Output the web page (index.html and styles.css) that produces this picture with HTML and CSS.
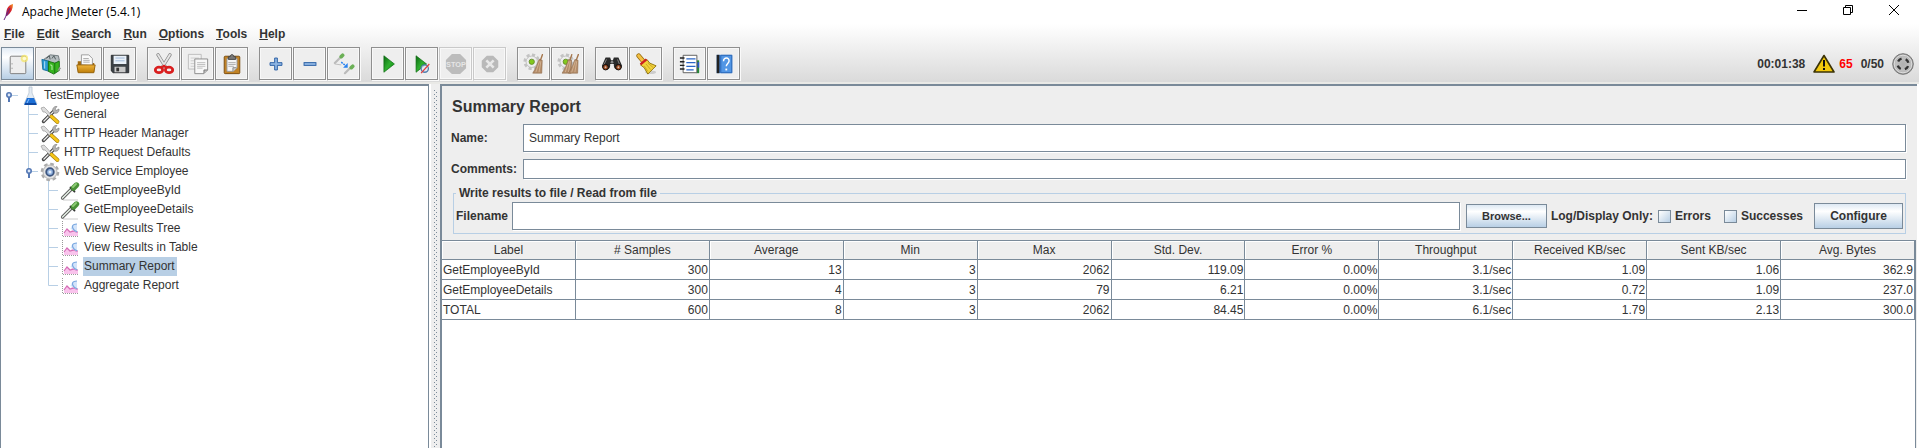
FILE: index.html
```html
<!DOCTYPE html>
<html lang="en">
<head>
<meta charset="utf-8">
<title>Apache JMeter (5.4.1)</title>
<link rel="stylesheet" href="styles.css">
</head>
<body>
<svg class="defs" aria-hidden="true">
  <defs>
    <linearGradient id="gGreen" x1="0" y1="0" x2="1" y2="1"><stop offset="0" stop-color="#0a6a10"/><stop offset=".5" stop-color="#2fae2f"/><stop offset="1" stop-color="#068a06"/></linearGradient>
    <linearGradient id="gFolder" x1="0" y1="0" x2="0" y2="1"><stop offset="0" stop-color="#f0b53c"/><stop offset="1" stop-color="#bd7d09"/></linearGradient>
    <linearGradient id="gFeather" x1="1" y1="0" x2="0" y2="1"><stop offset="0" stop-color="#f59a23"/><stop offset=".45" stop-color="#d8202a"/><stop offset="1" stop-color="#6b2480"/></linearGradient>
    <radialGradient id="gDisc"><stop offset="0" stop-color="#b0b0b0"/><stop offset=".7" stop-color="#c0c0c0"/><stop offset="1" stop-color="#999"/></radialGradient>
    <symbol id="wrench" viewBox="0 0 22 20">
      <path d="M4.500 16.500 15 6" stroke="#444" stroke-width="3.400" stroke-linecap="round"/>
      <path d="M4.500 16.500 15 6" stroke="#eee" stroke-width="1.300" stroke-dasharray="7 2"/>
      <path d="M14 6.500c-1-3 1-5.500 4-5l-2 2.500 1 1.500 3-1.500c.5 3-2 5-5 4z" fill="#b5b5b5" stroke="#777" stroke-width=".6"/>
      <path d="M2 3l3-1 3 3 5 6-1.500 1.500L6 7 4 7z" fill="#ddd" stroke="#999" stroke-width=".7"/>
      <path d="M12.500 11.500l6 5.500" stroke="#9b7710" stroke-width="3.800" stroke-linecap="round"/>
      <path d="M12.500 11.500l6 5.500" stroke="#f5c518" stroke-width="2.800" stroke-linecap="round"/>
    </symbol>
    <symbol id="dropper" viewBox="0 0 22 20">
      <path d="M4 19h15" stroke="#ccc"/>
      <path d="M3.500 17l9-9" stroke="#555" stroke-width="3.200" stroke-linecap="round"/>
      <path d="M3.500 17l8-8" stroke="#e4eee4" stroke-width="1.600" stroke-linecap="round"/>
      <path d="M11.500 6.500l4 4" stroke="#333" stroke-width="1.800" stroke-linecap="round"/>
      <path d="M14.500 7l3-3" stroke="#4a9138" stroke-width="5.400" stroke-linecap="round"/>
      <path d="M14 6l3-3" stroke="#8ccc74" stroke-width="2" stroke-linecap="round"/>
    </symbol>
    <symbol id="chart" viewBox="0 0 22 20">
      <path d="M3.500 2v15.500H19" fill="none" stroke="#999" stroke-dasharray="1 1"/>
      <path d="M5 17v-3l3-4 3 3 4-4 2 3 2 1v4z" fill="#f9c3ec"/>
      <path d="M5 14l3-4 3 3 4-1 2 1h2" fill="none" stroke="#d56cb5" stroke-width="1.200"/>
      <path d="M11 10c2 0 0-5 7-5v8c-3 0-4-3-7-3z" fill="#d3e4fa"/>
      <path d="M18 5c-6 0-5 4-3 6 1 1 2 1 3 2" fill="none" stroke="#7aa8e0" stroke-width="1.200"/>
    </symbol>
    <symbol id="toggle" viewBox="0 0 13 19">
      <path d="M7 9.500h6" stroke="#b8cfe5"/><path d="M4 11v5" stroke="#5478b5" stroke-width="2"/>
      <circle cx="4" cy="9" r="2.200" fill="#dde8f8" stroke="#5478b5" stroke-width="1.600"/>
    </symbol>
    <symbol id="branch" viewBox="0 0 13 19"><path d="M3.500 0v19M3.500 9.500H13" fill="none" stroke="#b8cfe5"/></symbol>
    <symbol id="branch-end" viewBox="0 0 13 19"><path d="M3.500 0v9.500H13" fill="none" stroke="#b8cfe5"/></symbol>
    <symbol id="gear" viewBox="0 0 22 22">
      <circle cx="10" cy="10" r="8" fill="none" stroke="#c3c3c3" stroke-width="3" stroke-dasharray="3.600 2.680"/>
      <circle cx="10" cy="10" r="6.500" fill="#eee" stroke="#bbb"/>
      <circle cx="10" cy="10" r="3" fill="#82c91e" stroke="#648b2b"/>
    </symbol>
    <symbol id="broom" viewBox="0 0 12 22">
      <path d="M11.500 0L9 7" stroke="#a5764c" stroke-width="1.500"/>
      <path d="M7.500 6l3.500 1-.5 14H.5C4 16 5.500 11 7.500 6z" fill="#b48c69" stroke="#8a6748" stroke-width=".6"/>
      <path d="M8 8L4 20M9.500 8L7.500 20" stroke="#dfc3a5" stroke-width=".7"/>
    </symbol>
  </defs>
</svg>

<header class="titlebar">
  <svg class="feather" viewBox="0 0 11 17"><path d="M10 0C6 1 4 4 3.500 7L2.500 12l1.500 0C8 9 10 5 10 0z" fill="url(#gFeather)"/><path d="M7 4L1 16" stroke="#6b2480" stroke-dasharray="8 1"/></svg>
  <h1 class="window-title">Apache JMeter (5.4.1)</h1>
  <div class="window-controls">
    <button aria-label="Minimize"><svg viewBox="0 0 12 12"><path d="M1 6.500h10" stroke="#000"/></svg></button>
    <button aria-label="Restore"><svg viewBox="0 0 12 12"><path d="M1.500 3.500h7v7h-7zM3.500 3V1.500h7v7H9" fill="none" stroke="#000"/></svg></button>
    <button aria-label="Close"><svg viewBox="0 0 12 12"><path d="M1 1l10 10M11 1L1 11" stroke="#000"/></svg></button>
  </div>
</header>

<div class="chrome">
  <nav class="menubar">
    <button><u>F</u>ile</button><button><u>E</u>dit</button><button><u>S</u>earch</button><button><u>R</u>un</button><button><u>O</u>ptions</button><button><u>T</u>ools</button><button><u>H</u>elp</button>
  </nav>
  <div class="toolbar">
    <div class="group">
      <button class="tool active" aria-label="New"><svg viewBox="0 0 24 24"><rect x="3.500" y="3.500" width="17" height="19" rx="1" fill="#eee" stroke="#777"/><path d="M5.500 11v1.500M5.500 16v1.500" stroke="#999"/><circle cx="19" cy="6" r="4" fill="#f4e465" opacity=".75"/><circle cx="19" cy="6" r="2" fill="#fffbd0"/></svg></button>
      <button class="tool" aria-label="Templates"><svg viewBox="0 0 24 24"><path d="M3 7l7-5 9 1 1 5-6 5z" fill="#b5bdc0" stroke="#6d777b"/><path d="M6 6l3-3 1 4M12 6l2-3 2 4" fill="none" stroke="#4c5658"/><path d="M1 7l8 2v11l-7-2z" fill="#2a9bd8" stroke="#176d9d"/><path d="M4 9v8" stroke="#bfe5fa"/><path d="M8 9l7 2 5-2v10l-6 4-6-3z" fill="#37b41f" stroke="#187012"/><path d="M15 11v11" stroke="#187012"/><path d="M10 13l2 .5v5" fill="none" stroke="#c8f5be"/><path d="M20 15l2 2-4 3z" fill="#999"/></svg></button>
      <button class="tool" aria-label="Open"><svg viewBox="0 0 24 24"><path d="M3 9h6l1 2h11v10H3z" fill="#a36b10"/><path d="M7 13V2h8l4 4v8z" fill="#fafafa" stroke="#999"/><path d="M9 6h6M9 8h7M9 10h7" stroke="#aaa"/><path d="M2 13h20l-1.500 8.500h-17z" fill="url(#gFolder)" stroke="#94600a"/></svg></button>
      <button class="tool" aria-label="Save"><svg viewBox="0 0 24 24"><path d="M2.500 2.500h19v19h-17l-2-2z" fill="#3c4146" stroke="#25282b"/><path d="M5 3h14v9H5z" fill="#e9f0f8"/><path d="M7 5.500h10M7 8.500h10" stroke="#9bb6d5"/><path d="M6 15h12v6H6z" fill="#c8c8c8"/><path d="M8 16h3v4H8z" fill="#333"/></svg></button>
    </div>
    <div class="group">
      <button class="tool" aria-label="Cut"><svg viewBox="0 0 24 24"><path d="M5.500 2l8 13M18.500 2l-8 13" stroke="#888" stroke-width="3.600" stroke-linecap="round"/><path d="M5.500 2l8 13M18.500 2l-8 13" stroke="#e6e6e6" stroke-width="2" stroke-linecap="round"/><ellipse cx="6.500" cy="18.500" rx="4" ry="3" fill="none" stroke="#d91e1e" stroke-width="3"/><ellipse cx="17.500" cy="18.500" rx="4" ry="3" fill="none" stroke="#d91e1e" stroke-width="3"/><path d="M9 16l3-2 3 2" fill="none" stroke="#d91e1e" stroke-width="2.400"/></svg></button>
      <button class="tool" aria-label="Copy"><svg viewBox="0 0 24 24"><path d="M1.500 1.500h14v16h-14z" fill="#f1f1f1" stroke="#bbb"/><path d="M4 5.500h9M4 8.500h4M4 11.500h4M4 14.500h4" stroke="#ccc"/><path d="M8.500 6.500h14v12l-4 4h-10z" fill="#f8f8f8" stroke="#888"/><path d="M18.500 22v-3.500h4" fill="#bbb" stroke="#777"/><path d="M11 10.500h9M11 12.500h9M11 14.500h9M11 16.500h6" stroke="#bbb"/></svg></button>
      <button class="tool" aria-label="Paste"><svg viewBox="0 0 24 24"><rect x="3.500" y="3.500" width="17" height="19" rx="1" fill="#c28325" stroke="#76480b"/><path d="M6.500 6h11v10l-4 4h-7z" fill="#f5f5f5" stroke="#999"/><path d="M8 4h2c0-3 4-3 4 0h2v3H8z" fill="#777" stroke="#444"/><path d="M8 10.500h8M8 12.500h8M8 14.500h6" stroke="#aaa"/><path d="M13 20v-4h4" fill="#ccc" stroke="#888"/></svg></button>
    </div>
    <div class="group">
      <button class="tool" aria-label="Expand all"><svg viewBox="0 0 24 24"><path d="M10.500 5.500h3v5h5v3h-5v5h-3v-5h-5v-3h5z" fill="#8eb5e2" stroke="#275da3"/></svg></button>
      <button class="tool" aria-label="Collapse all"><svg viewBox="0 0 24 24"><rect x="5.500" y="10.500" width="13" height="3" fill="#8eb5e2" stroke="#275da3"/></svg></button>
      <button class="tool" aria-label="Toggle"><svg viewBox="0 0 24 24"><path d="M2 11l6-6M13 22l6-6" stroke="#bbb" stroke-width="2.400" stroke-linecap="round"/><path d="M9 4l1.500-1.500M20 16l1.500-1.500" stroke="#6bb056" stroke-width="4" stroke-linecap="round"/><path d="M2 12l7 1" stroke="#bbb"/><path d="M9 10l5 4" stroke="#2882f0" stroke-width="1.600" stroke-dasharray="2 1"/><path d="M16 11v5h-5z" fill="#2882f0"/></svg></button>
    </div>
    <div class="group">
      <button class="tool" aria-label="Start"><svg viewBox="0 0 24 24"><path d="M7.500 3l11.500 9L7.500 21z" fill="url(#gGreen)" stroke="#07640b" stroke-width=".7"/></svg></button>
      <button class="tool" aria-label="Start no pauses"><svg viewBox="0 0 24 24"><path d="M5.500 3l11.500 9-11.500 9z" fill="url(#gGreen)" stroke="#07640b" stroke-width=".7"/><circle cx="15" cy="17" r="4" fill="#dce8f5" fill-opacity=".8" stroke="#527fae" stroke-width="1.400"/><path d="M11 22l9-10" stroke="#e23b3b" stroke-width="1.300"/></svg></button>
      <button class="tool off" aria-label="Stop" disabled><svg viewBox="0 0 24 24"><path d="M7.500 1h9L23 7.500v9L16.500 23h-9L1 16.500v-9z" fill="#bcbcbc"/><text x="12" y="15" text-anchor="middle" class="stop-text">STOP</text></svg></button>
      <button class="tool off" aria-label="Shutdown" disabled><svg viewBox="0 0 24 24"><path d="M8.500 3h7L21 8.500v7L15.500 21h-7L3 15.500v-7z" fill="#b9b9b9"/><path d="M8 8l8 8M16 8l-8 8" stroke="#e8e8e8" stroke-width="2.800"/></svg></button>
    </div>
    <div class="group">
      <button class="tool" aria-label="Clear"><svg viewBox="0 0 24 24"><use href="#gear" x="0" y="0" width="21" height="21"/><use href="#broom" x="10" y="1" width="12" height="22"/></svg></button>
      <button class="tool" aria-label="Clear all"><svg viewBox="0 0 24 24"><use href="#gear" x="0" y="0" width="21" height="21"/><use href="#broom" x="5" y="1" width="12" height="22"/><use href="#broom" x="12" y="1" width="12" height="22"/></svg></button>
    </div>
    <div class="group">
      <button class="tool" aria-label="Search"><svg viewBox="0 0 24 24"><path d="M5 5h5l1 3h2l1-3h5l4 9c0 6-9 6-9 0v-2h-4v2c0 6-9 6-9 0z" fill="#292929"/><path d="M6 7l-3 6M18 7l2 5" stroke="#888"/><circle cx="5" cy="15.500" r="3" fill="#9a4a22" stroke="#080808"/><circle cx="19" cy="15.500" r="3" fill="#9a4a22" stroke="#080808"/><circle cx="5" cy="15.500" r="1" fill="#d6c0b0"/><circle cx="19" cy="15.500" r="1" fill="#d6c0b0"/><circle cx="12" cy="10" r="1.500" fill="#888"/></svg></button>
      <button class="tool" aria-label="Reset search"><svg viewBox="0 0 24 24"><ellipse cx="17" cy="21" rx="6" ry="2" fill="#ccc"/><path d="M4 3l5 6" stroke="#966b0c" stroke-width="5" stroke-linecap="round"/><path d="M4 3l5 6" stroke="#f3bf42" stroke-width="3.400" stroke-linecap="round"/><path d="M6 13l7-6 3 4 7 3-9 9-4-7z" fill="#f2d23c" stroke="#8d7109"/><path d="M10 14l4 6M12 12l5 6M14 11l6 5" stroke="#b99a1c" stroke-width=".8"/><path d="M6 12.500l6.500-5.500" stroke="#cf2020" stroke-width="2.600"/></svg></button>
    </div>
    <div class="group">
      <button class="tool" aria-label="Function helper"><svg viewBox="0 0 24 24"><path d="M19 8h3v14h-3z" fill="#248c38"/><path d="M20 10h2v6h-2z" fill="#2a55d0"/><path d="M4.500 2.500h15v19h-15z" fill="#fff" stroke="#555"/><path d="M8 6.500h10M8 10.500h10M8 14.500h10M8 18.500h8" stroke="#2b66c8" stroke-width="1.400"/><path d="M1 5.500h5M1 9.500h5M1 13.500h5M1 17.500h5" stroke="#222" stroke-width="1.500"/></svg></button>
      <button class="tool" aria-label="Help"><svg viewBox="0 0 24 24"><path d="M4 2h17v20H4z" fill="#4a8bdc"/><path d="M4 2h3v20H4z" fill="#222"/><path d="M8.500 2.500h12v19h-12z" fill="#5296e5" stroke="#2b67b5"/><path d="M11.500 9c0-5 6.500-4.500 6 0-.3 2.500-3 2.500-3 5.500" fill="none" stroke="#fff" stroke-width="1.600"/><path d="M13.500 17h2v2h-2z" fill="#fff"/></svg></button>
    </div>
    <div class="status">
      <span>00:01:38</span>
      <svg class="warn" viewBox="0 0 22 19"><path d="M11 1.500L21 18H1z" fill="#f2c80c" stroke="#3a3206" stroke-width="1.600" stroke-linejoin="round"/><path d="M11 6v6.500M11 14v2" stroke="#111" stroke-width="2"/></svg>
      <span class="errors-count">65</span>
      <span class="threads">0/50</span>
      <svg class="disc" viewBox="0 0 22 22"><circle cx="11" cy="11" r="10.300" fill="url(#gDisc)" stroke="#777"/><circle cx="11" cy="11" r="8.800" fill="none" stroke="#ddd"/><circle cx="11" cy="11" r="5.500" fill="none" stroke="#333" stroke-width="2.400" stroke-dasharray="4.300 4.340" stroke-dashoffset="-2.170"/></svg>
    </div>
  </div>
</div>

<main class="workspace">
  <nav class="tree" aria-label="Test plan">
    <ul>
      <li><div class="node"><svg class="guide"><use href="#toggle"/></svg><svg class="icon" viewBox="0 0 22 20"><path d="M10 1h3v6l5 11H5l5-11z" fill="#e3ebf3" stroke="#b7c4d0" stroke-width=".8"/><path d="M8 12h7l3 7H5z" fill="#1c6fd6"/><path d="M6 18h11" stroke="#0b3d91" stroke-width="1.500"/><path d="M10 13l-2 4" stroke="#8dc2ff"/></svg><span class="name">TestEmployee</span></div>
        <ul>
          <li><div class="node"><svg class="guide"><use href="#branch"/></svg><svg class="icon"><use href="#wrench"/></svg><span class="name">General</span></div></li>
          <li><div class="node"><svg class="guide"><use href="#branch"/></svg><svg class="icon"><use href="#wrench"/></svg><span class="name">HTTP Header Manager</span></div></li>
          <li><div class="node"><svg class="guide"><use href="#branch"/></svg><svg class="icon"><use href="#wrench"/></svg><span class="name">HTTP Request Defaults</span></div></li>
          <li><div class="node"><svg class="guide" viewBox="0 0 13 19"><path d="M3.500 0v7" stroke="#b8cfe5"/><use href="#toggle"/></svg><svg class="icon" viewBox="0 0 22 20"><circle cx="11" cy="10" r="8" fill="none" stroke="#aaa" stroke-width="2.600" stroke-dasharray="3.600 2.680"/><circle cx="11" cy="10" r="7" fill="#e2e2e2" stroke="#b5b5b5"/><circle cx="11" cy="10" r="3.800" fill="#8fb0dd" stroke="#3d557f" stroke-width="1.800"/><circle cx="11" cy="10" r="1.500" fill="#e3edfb"/></svg><span class="name">Web Service Employee</span></div>
            <ul>
              <li><div class="node"><svg class="guide"><use href="#branch"/></svg><svg class="icon"><use href="#dropper"/></svg><span class="name">GetEmployeeById</span></div></li>
              <li><div class="node"><svg class="guide"><use href="#branch"/></svg><svg class="icon"><use href="#dropper"/></svg><span class="name">GetEmployeeDetails</span></div></li>
              <li><div class="node"><svg class="guide"><use href="#branch"/></svg><svg class="icon"><use href="#chart"/></svg><span class="name">View Results Tree</span></div></li>
              <li><div class="node"><svg class="guide"><use href="#branch"/></svg><svg class="icon"><use href="#chart"/></svg><span class="name">View Results in Table</span></div></li>
              <li><div class="node"><svg class="guide"><use href="#branch"/></svg><svg class="icon"><use href="#chart"/></svg><span class="name selected">Summary Report</span></div></li>
              <li><div class="node"><svg class="guide"><use href="#branch-end"/></svg><svg class="icon"><use href="#chart"/></svg><span class="name">Aggregate Report</span></div></li>
            </ul>
          </li>
        </ul>
      </li>
    </ul>
  </nav>
  <div class="divider"></div>
  <section class="pane">
    <form class="form">
      <h2>Summary Report</h2>
      <div class="field"><label for="name">Name:</label><input id="name" class="tall" type="text" value="Summary Report"></div>
      <div class="field"><label for="comments">Comments:</label><input id="comments" class="short" type="text"></div>
      <fieldset>
        <legend>Write results to file / Read from file</legend>
        <div class="file-row">
          <label for="filename">Filename</label>
          <input id="filename" class="tall" type="text">
          <button type="button" class="push browse">Browse...</button>
          <span class="log-label">Log/Display Only:</span>
          <label class="check"><input type="checkbox">Errors</label>
          <label class="check"><input type="checkbox">Successes</label>
          <button type="button" class="push configure">Configure</button>
        </div>
      </fieldset>
    </form>
    <div class="results">
      <table>
        <thead><tr><th>Label</th><th># Samples</th><th>Average</th><th>Min</th><th>Max</th><th>Std. Dev.</th><th>Error %</th><th>Throughput</th><th>Received KB/sec</th><th>Sent KB/sec</th><th>Avg. Bytes</th></tr></thead>
        <tbody>
          <tr><td>GetEmployeeById</td><td>300</td><td>13</td><td>3</td><td>2062</td><td>119.09</td><td>0.00%</td><td>3.1/sec</td><td>1.09</td><td>1.06</td><td>362.9</td></tr>
          <tr><td>GetEmployeeDetails</td><td>300</td><td>4</td><td>3</td><td>79</td><td>6.21</td><td>0.00%</td><td>3.1/sec</td><td>0.72</td><td>1.09</td><td>237.0</td></tr>
          <tr><td>TOTAL</td><td>600</td><td>8</td><td>3</td><td>2062</td><td>84.45</td><td>0.00%</td><td>6.1/sec</td><td>1.79</td><td>2.13</td><td>300.0</td></tr>
        </tbody>
      </table>
    </div>
  </section>
</main>
</body>
</html>
```
FILE: styles.css
```css
* { box-sizing: border-box; }

body {
  margin: 0;
  min-height: 100vh;
  display: flex;
  flex-direction: column;
  background: #fff;
  color: #333;
  font: 12px/14px "Liberation Sans", Arial, sans-serif;
}

button, input { font: inherit; color: inherit; margin: 0; padding: 0; }
ul { list-style: none; margin: 0; padding: 0; }
svg { display: block; flex: none; fill: none; }
.defs { position: absolute; width: 0; height: 0; }

/* Title bar */
.titlebar {
  display: flex;
  align-items: center;
  height: 24px;
  padding: 0 19px 0 3px;
}
.feather { width: 11px; height: 17px; margin-right: 8px; }
.window-title {
  flex: 1;
  margin: 0;
  color: #000;
  font: 12px/16px "Open Sans", "Noto Sans", sans-serif;
}
.window-controls { display: flex; gap: 34px; padding-bottom: 4px; }
.window-controls button { border: 0; background: none; }
.window-controls svg { width: 12px; height: 12px; }

/* Menu and toolbar */
.chrome {
  background: linear-gradient(#fff, #dadada);
  border-bottom: 2px solid #e9e9e6;
}
.menubar { display: flex; gap: 12px; padding: 3px 4px; font-weight: bold; }
.menubar button { border: 0; background: none; }
.toolbar { display: flex; gap: 11px; padding: 3px 5px 2px 1px; }
.group { display: flex; gap: 1px; }
.tool {
  display: flex;
  align-items: center;
  justify-content: center;
  width: 33px;
  height: 33px;
  border: 1px solid #8f8f8f;
  background: #eee;
  box-shadow: inset 0 0 0 1px #f8f8f8, 1px 1px 0 #fafafa;
}
.tool svg { width: 22px; height: 22px; }
.tool.active {
  border-color: #7a8a99;
  background: linear-gradient(#e3ecf5, #fff 30%, #b8cfe5);
  box-shadow: 1px 1px 0 #fafafa;
}
.tool.off { border-color: #c9c9c9; }
.stop-text { font: bold 8px "Liberation Sans", sans-serif; fill: #e6e6e6; }
.status {
  display: flex;
  align-items: center;
  margin-left: auto;
  font-weight: bold;
}
.warn { width: 22px; height: 19px; margin: 0 4px 0 8px; }
.errors-count { color: #f00; }
.threads { margin: 0 8px; }
.disc { width: 22px; height: 22px; }

/* Workspace */
.workspace { flex: 1; display: flex; padding-right: 2px; }
.tree {
  width: 429px;
  border: solid #7a8a99;
  border-width: 2px 1px 0 1px;
}
.tree ul ul { padding-left: 20px; }
.tree > ul { padding-left: 4px; }
.node { display: flex; align-items: center; height: 19px; }
.guide { width: 13px; height: 19px; }
.icon { width: 22px; height: 20px; margin: 0 2px 0 1px; }
.name { padding: 2px 2px 3px 1px; }
.name.selected { background: #b8cfe5; }

/* Splitter with its staggered grip dots */
.divider {
  width: 11px;
  padding: 6px 3px 0;
  border: solid #fff;
  border-width: 0 0 0 2px;
  background:
    conic-gradient(from 270deg at 1px 1px, #7a8a99 90deg, transparent 0) 0 0 / 4px 4px content-box,
    conic-gradient(from 270deg at 1px 1px, #7a8a99 90deg, transparent 0) 2px 2px / 4px 4px content-box,
    linear-gradient(#eee, #eee) padding-box;
}

.pane {
  flex: 1;
  display: flex;
  flex-direction: column;
  min-width: 0;
  border: solid #7a8a99;
  border-width: 2px 0 0 2px;
  background: #eee;
}
.form { padding: 11px 11px 6px 9px; font-weight: bold; }
h2 { margin: 0 0 7px; padding-left: 1px; font-size: 16px; line-height: 20px; }
.field { display: flex; align-items: center; gap: 8px; margin-bottom: 7px; }
.field label { width: 64px; white-space: nowrap; }
input[type="text"] {
  flex: 1;
  min-width: 0;
  padding: 0 5px;
  border: 1px solid #7a8a99;
  border-radius: 0;
  background: #fff;
  box-shadow: 1px 1px 0 #fff;
  font-weight: normal;
}
.tall { height: 28px; }
.short { height: 20px; }
fieldset {
  min-width: 0;
  margin: 0 0 0 2px;
  padding: 2px 2px 3px;
  border: 1px solid #b8cfe5;
}
legend { padding: 0 3px; }
.file-row { display: flex; align-items: center; }
#filename { margin: 0 6px 0 4px; }
.push {
  border: 1px solid #7a8a99;
  background: linear-gradient(#dde8f3, #fff 30%, #b8cfe5);
  font-weight: bold;
}
.browse { width: 81px; height: 24px; font-size: 11px; }
.configure { width: 89px; height: 26px; }
.log-label { margin: 0 5px 0 4px; }
.check { display: flex; align-items: center; gap: 4px; margin-right: 13px; }
.check + .check { margin-right: 11px; }
.check input {
  appearance: none;
  width: 13px;
  height: 13px;
  border: 1px solid #7a8a99;
  background: linear-gradient(135deg, #fff, #b8cfe5);
}

/* Results table */
.results {
  flex: 1;
  margin-right: 1px;
  border: solid #7a8a99;
  border-width: 1px 1px 0 0;
  background: #fff;
}
table { width: 100%; table-layout: fixed; border-spacing: 0; }
th, td {
  height: 20px;
  padding: 0 2px;
  border: solid #7a8a99;
  border-width: 0 1px 1px 0;
  text-align: right;
  white-space: nowrap;
}
th {
  height: 19px;
  background: #eee;
  box-shadow: inset 1px 1px 0 #fff;
  font-weight: normal;
  text-align: center;
}
td { padding-right: 1px; }
td:first-child { text-align: left; padding-left: 1px; }
```
